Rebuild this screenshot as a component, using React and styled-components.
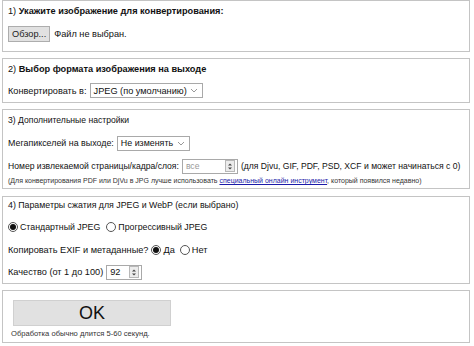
import React from 'react';
import styled, { createGlobalStyle } from 'styled-components';

const Global = createGlobalStyle`
  html, body {
    margin: 0;
    padding: 0;
    background: #ffffff;
  }
  body {
    font-family: "Liberation Sans", Arial, sans-serif;
    font-size: 9.2px;
    color: #111111;
  }
`;

const Page = styled.div`
  width: 468px;
  padding-left: 2px;
  display: flex;
  flex-direction: column;
`;

const Box = styled.div`
  display: flex;
  flex-direction: column;
  align-items: flex-start;
  border: 1px solid #c4c4c4;
  margin-top: ${p => p.$top || 0}px;
  padding: ${p => p.$pt}px 6px ${p => p.$pb}px 5px;
  gap: ${p => p.$gap}px;
`;

const Heading = styled.div`
  height: 14px;
  line-height: 14px;
  font-size: ${p => p.$fs || 9.2}px;
  white-space: nowrap;
  b {
    font-weight: bold;
  }
`;

const Row = styled.div`
  display: flex;
  align-items: center;
  height: ${p => p.$h || 16}px;
  margin-top: ${p => p.$mt || 0}px;
  font-size: ${p => p.$fs || 9.2}px;
  white-space: nowrap;
  gap: ${p => p.$gap || 3}px;
`;

const FileButton = styled.button`
  height: 16px;
  padding: 0 3px;
  font: inherit;
  color: #222;
  background: #e1e1e1;
  border: 1px solid #adadad;
  border-radius: 0;
  margin-right: 1px;
`;

const SelectBox = styled.div`
  display: flex;
  align-items: center;
  justify-content: space-between;
  box-sizing: border-box;
  width: ${p => p.$w}px;
  height: 15px;
  padding: 0 4px 0 3px;
  border: 1px solid #a9a9a9;
  background: #fff;
  color: #111;
`;

const Chevron = () => (
  <svg width="8" height="5" viewBox="0 0 8 5">
    <path d="M1 1 L4 4 L7 1" fill="none" stroke="#999" strokeWidth="1" />
  </svg>
);

const NumberBox = styled.div`
  display: flex;
  align-items: center;
  justify-content: space-between;
  box-sizing: border-box;
  width: ${p => p.$w}px;
  height: 15px;
  padding: 0 2px 0 3px;
  border: 1px solid #a9a9a9;
  background: #fff;
  color: ${p => (p.$placeholder ? '#9a9a9a' : '#111')};
`;

const SpinBtn = styled.div`
  width: 8px;
  height: 10px;
  border: 1px solid #b8b8b8;
  background: #ececec;
  display: flex;
  align-items: center;
  justify-content: center;
`;

const Spinner = () => (
  <SpinBtn>
    <svg width="6" height="9" viewBox="0 0 6 9">
      <path d="M1 3.5 L3 1.5 L5 3.5 Z M1 5.5 L3 7.5 L5 5.5 Z" fill="#444" />
    </svg>
  </SpinBtn>
);

const Note = styled.div`
  height: 10px;
  line-height: 10px;
  font-size: ${p => p.$fs || 7}px;
  color: #333;
  margin-top: ${p => p.$mt || 0}px;
  margin-left: ${p => p.$ml || 0}px;
  white-space: nowrap;
`;

const Link = styled.a`
  color: #1a1aa8;
  text-decoration: underline;
`;

const RadioLabel = styled.label`
  display: flex;
  align-items: center;
  gap: 2px;
  margin-right: ${p => p.$mr || 0}px;
`;

const RadioCircle = styled.span`
  width: 10px;
  height: 10px;
  box-sizing: border-box;
  border-radius: 50%;
  border: 1px solid #555;
  background: #fff;
  display: flex;
  align-items: center;
  justify-content: center;
  &::after {
    content: '';
    width: 6px;
    height: 6px;
    border-radius: 50%;
    background: ${p => (p.$checked ? '#111' : 'transparent')};
  }
`;

const Radio = ({ checked, children, mr }) => (
  <RadioLabel $mr={mr}>
    <RadioCircle $checked={checked} />
    {children}
  </RadioLabel>
);

const OkButton = styled.button`
  width: 158px;
  height: 26px;
  margin-left: 5px;
  font-family: "Liberation Sans", Arial, sans-serif;
  font-size: 18px;
  color: #111;
  background: #e1e1e1;
  border: 1px solid #d0d0d0;
  border-radius: 0;
`;

export default function App() {
  return (
    <>
      <Global />
      <Page>
        <Box $pt={3} $pb={9} $gap={8}>
          <Heading>1) <b>Укажите изображение для конвертирования:</b></Heading>
          <Row>
            <FileButton type="button">Обзор...</FileButton>
            Файл не выбран.
          </Row>
        </Box>

        <Box $top={6} $pt={3} $pb={4} $gap={7}>
          <Heading>2) <b>Выбор формата изображения на выходе</b></Heading>
          <Row $h={15}>
            Конвертировать в:
            <SelectBox $w={113}>
              JPEG (по умолчанию)
              <Chevron />
            </SelectBox>
          </Row>
        </Box>

        <Box $top={6} $pt={3} $pb={2} $gap={0}>
          <Heading $fs={8.6}>3) Дополнительные настройки</Heading>
          <Row $mt={8} $fs={8.9}>
            Мегапикселей на выходе:
            <SelectBox $w={73}>
              Не изменять
              <Chevron />
            </SelectBox>
          </Row>
          <Row $mt={7} $fs={8.6}>
            Номер извлекаемой страницы/кадра/слоя:
            <NumberBox $w={56} $placeholder>
              все
              <Spinner />
            </NumberBox>
            <span>(для Djvu, GIF, PDF, PSD, XCF и может начинаться с 0)</span>
          </Row>
          <Note $mt={2}>
            (Для конвертирования PDF или DjVu в JPG лучше использовать{' '}
            <Link href="#">специальный онлайн инструмент</Link>, который появился недавно)
          </Note>
        </Box>

        <Box $top={7} $pt={1} $pb={3} $gap={0}>
          <Heading $fs={8.8}>4) Параметры сжатия для JPEG и WebP (если выбрано)</Heading>
          <Row $mt={7} $fs={8.8}>
            <Radio checked mr={3}>Стандартный JPEG</Radio>
            <Radio>Прогрессивный JPEG</Radio>
          </Row>
          <Row $mt={7}>
            Копировать EXIF и метаданные?
            <Radio checked mr={2}>Да</Radio>
            <Radio>Нет</Radio>
          </Row>
          <Row $mt={6}>
            Качество (от 1 до 100)
            <NumberBox $w={36}>
              92
              <Spinner />
            </NumberBox>
          </Row>
        </Box>

        <Box $top={6} $pt={9} $pb={3} $gap={3}>
          <OkButton type="button">OK</OkButton>
          <Note $ml={3} $fs={7.6}>Обработка обычно длится 5-60 секунд.</Note>
        </Box>
      </Page>
    </>
  );
}
